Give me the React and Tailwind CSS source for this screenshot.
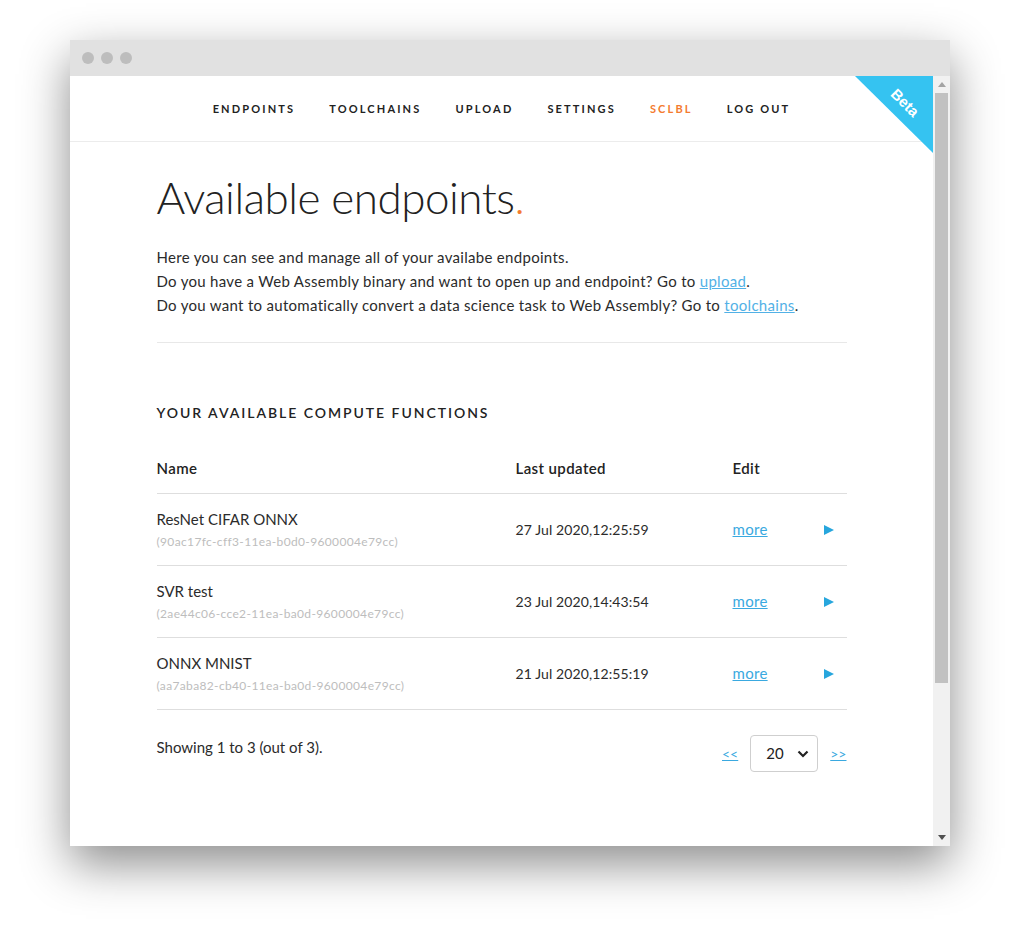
import React from "react";

const rows = [
  { name: "ResNet CIFAR ONNX", id: "(90ac17fc-cff3-11ea-b0d0-9600004e79cc)", date: "27 Jul 2020,12:25:59" },
  { name: "SVR test", id: "(2ae44c06-cce2-11ea-ba0d-9600004e79cc)", date: "23 Jul 2020,14:43:54" },
  { name: "ONNX MNIST", id: "(aa7aba82-cb40-11ea-ba0d-9600004e79cc)", date: "21 Jul 2020,12:55:19" },
];

const navItems = ["ENDPOINTS", "TOOLCHAINS", "UPLOAD", "SETTINGS", "SCLBL", "LOG OUT"];

export default function App() {
  return (
    <div className="w-[1020px] h-[946px] bg-white pt-[40px] pl-[70px] font-['Lato','Open_Sans',sans-serif] text-[#2b2b2b]">
      <div className="w-[880px] h-[806px] flex flex-col shadow-[0_18px_45px_rgba(0,0,0,0.45)]">
        {/* title bar */}
        <div className="h-[36px] bg-[#e1e1e1] flex items-center gap-[7px] pl-[12px] shrink-0">
          <span className="w-[12px] h-[12px] rounded-full bg-[#bdbdbd]" />
          <span className="w-[12px] h-[12px] rounded-full bg-[#bdbdbd]" />
          <span className="w-[12px] h-[12px] rounded-full bg-[#bdbdbd]" />
        </div>
        <div className="flex flex-1 min-h-0">
          {/* content */}
          <div className="relative flex-1 bg-white overflow-hidden">
            {/* Beta ribbon */}
            <div className="absolute top-0 right-0 w-[78px] h-[77px] bg-[#35c3f1] [clip-path:polygon(0_0,100%_0,100%_100%)]" />
            <span className="absolute top-[19px] right-[11px] rotate-45 text-white font-bold text-[15px] leading-none font-['Liberation_Sans',sans-serif]">
              Beta
            </span>

            {/* nav */}
            <nav className="h-[66px] border-b border-[#ececec] flex items-center justify-center gap-[34px] pt-[1px]">
              {navItems.map((n) => (
                <span
                  key={n}
                  className={`text-[11px] font-bold tracking-[2.15px] ${n === "SCLBL" ? "text-[#f47b30]" : "text-[#222]"}`}
                >
                  {n}
                </span>
              ))}
            </nav>

            <main className="w-[690px] mx-auto">
              <h1 className="mt-[29px] text-[44px] leading-[53px] font-light tracking-[-0.5px] text-[#222]">
                Available endpoints<span className="text-[#f47b30]">.</span>
              </h1>
              <div className="mt-[21px] text-[15px] leading-[24px] tracking-[0.3px] text-[#2b2b2b]">
                <p>Here you can see and manage all of your availabe endpoints.</p>
                <p>
                  Do you have a Web Assembly binary and want to open up and endpoint? Go to{" "}
                  <a className="text-[#52b1e6] underline">upload</a>.
                </p>
                <p>
                  Do you want to automatically convert a data science task to Web Assembly? Go to{" "}
                  <a className="text-[#52b1e6] underline">toolchains</a>.
                </p>
              </div>
              <div className="mt-[25px] border-t border-[#e8e8e8]" />

              <h2 className="mt-[60px] text-[14px] leading-[20px] font-semibold tracking-[1.95px] text-[#222]">
                YOUR AVAILABLE COMPUTE FUNCTIONS
              </h2>

              <div className="mt-[20px]">
                <div className="grid grid-cols-[359px_217px_1fr] pt-[15px] pb-[15px] text-[15px] leading-[20px] font-semibold tracking-[0.4px] text-[#222]">
                  <span>Name</span>
                  <span>Last updated</span>
                  <span>Edit</span>
                </div>
                {rows.map((r) => (
                  <div
                    key={r.id}
                    className="grid grid-cols-[359px_217px_1fr_auto] items-center h-[72px] border-t border-[#dedede]"
                  >
                    <div className="flex flex-col">
                      <span className="text-[15px] leading-[20px] text-[#2b2b2b] -mt-[1px]">{r.name}</span>
                      <span className="text-[12px] leading-[16px] mt-[5px] tracking-[0.35px] text-[#bdbdbd]">
                        {r.id}
                      </span>
                    </div>
                    <span className="text-[14px] tracking-[0.1px] text-[#2b2b2b]">{r.date}</span>
                    <a className="text-[15px] tracking-[0.3px] text-[#3aa9e0] underline">more</a>
                    <svg width="10" height="10" viewBox="0 0 10 10" className="mr-[13px]">
                      <path d="M0 0 L10 5 L0 10 Z" fill="#27a6dd" />
                    </svg>
                  </div>
                ))}
                <div className="border-t border-[#dedede] pt-[25px] flex justify-between items-start">
                  <span className="text-[15px] leading-[24px] text-[#2b2b2b]">Showing 1 to 3 (out of 3).</span>
                  <div className="flex items-center">
                    <a className="text-[14px] text-[#3aa9e0] underline mr-[12px]">&lt;&lt;</a>
                    <div className="w-[68px] h-[37px] rounded-[4px] border border-[#cfcfcf] flex items-center justify-between pl-[15px] pr-[8px]">
                      <span className="text-[15px] text-[#222]">20</span>
                      <svg width="12" height="8" viewBox="0 0 12 8">
                        <path d="M1.5 1.5 L6 6 L10.5 1.5" fill="none" stroke="#222" strokeWidth="2.2" />
                      </svg>
                    </div>
                    <a className="text-[14px] text-[#3aa9e0] underline ml-[12px]">&gt;&gt;</a>
                  </div>
                </div>
              </div>
            </main>
          </div>

          {/* scrollbar */}
          <div className="w-[17px] bg-[#f1f1f1] flex flex-col items-center">
            <div className="h-[17px] flex items-center justify-center">
              <svg width="8" height="5" viewBox="0 0 8 5">
                <path d="M0 5 L4 0 L8 5 Z" fill="#a3a3a3" />
              </svg>
            </div>
            <div className="w-[13px] h-[590px] bg-[#c1c1c1]" />
            <div className="flex-1" />
            <div className="h-[17px] flex items-center justify-center">
              <svg width="8" height="5" viewBox="0 0 8 5">
                <path d="M0 0 L8 0 L4 5 Z" fill="#505050" />
              </svg>
            </div>
          </div>
        </div>
      </div>
    </div>
  );
}
